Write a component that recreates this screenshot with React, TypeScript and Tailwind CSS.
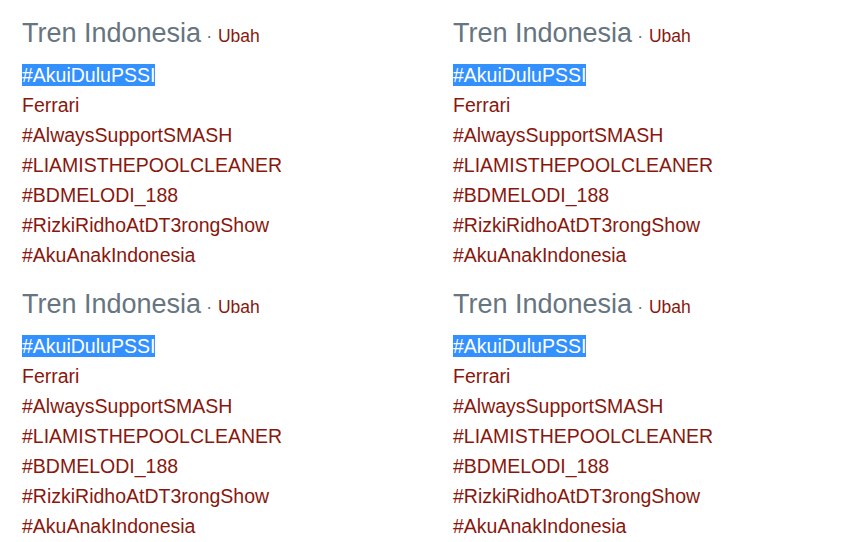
import React from "react";

const items = [
  "#AkuiDuluPSSI",
  "Ferrari",
  "#AlwaysSupportSMASH",
  "#LIAMISTHEPOOLCLEANER",
  "#BDMELODI_188",
  "#RizkiRidhoAtDT3rongShow",
  "#AkuAnakIndonesia",
];

function Block() {
  return (
    <div className="flex flex-col">
      <div className="flex items-baseline h-[40px] leading-[40px] whitespace-nowrap">
        <span className="text-[27px] text-[#66757f]">Tren Indonesia</span>
        <span className="text-[17.5px] text-[#66757f] ml-[5px]">·</span>
        <span className="text-[17.5px] text-[#88180e] ml-[6px]">Ubah</span>
      </div>
      <ul className="mt-[7px] flex flex-col">
        {items.map((t, i) => (
          <li key={t} className="h-[30px] leading-[30px] text-[19.5px] text-[#88180e] whitespace-nowrap">
            {i === 0 ? <span className="bg-[#3390ff] text-white">{t}</span> : t}
          </li>
        ))}
      </ul>
    </div>
  );
}

export default function App() {
  return (
    <div
      className="w-[862px] h-[542px] bg-white overflow-hidden pl-[22px] pt-[13px]"
      style={{ fontFamily: '"Liberation Sans", Arial, sans-serif' }}
    >
      <div className="grid grid-cols-[431px_409px] gap-y-[14px]">
        <Block />
        <Block />
        <Block />
        <Block />
      </div>
    </div>
  );
}
